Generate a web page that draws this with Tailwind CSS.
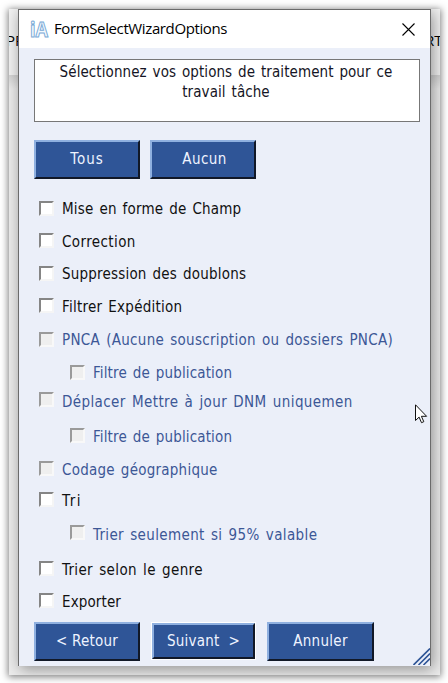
<!DOCTYPE html>
<html lang="fr">
<head>
    <meta charset="UTF-8">
    <meta name="viewport" content="width=device-width, initial-scale=1.0">
    <title>FormSelectWizardOptions</title>
    <script src="https://cdn.jsdelivr.net/npm/@tailwindcss/browser@4"></script>
</head>
<body class="bg-white h-[683px] overflow-hidden px-[9px] pt-[9px]">
    <!-- Application behind the dialog -->
    <div class="relative w-[431px] h-[666px] bg-[#f1f1f1] shadow-[0_1px_7px_1px_rgba(0,0,0,0.5)]">
        <div class="absolute inset-0 overflow-hidden font-['Open_Sans',sans-serif] text-[15px] leading-5">
            <div class="h-[66px] bg-[#f1f1f1]"></div>
            <div class="h-[600px] bg-linear-to-b from-[#d2d2d2] to-[#ececec] to-[14px]"></div>
            <span class="absolute left-[-3px] top-[21px]">PP</span>
            <span class="absolute left-[416px] top-[21px]">RT</span>
        </div>

        <!-- Dialog -->
        <div class="absolute inset-0 overflow-hidden">
            <div class="ml-[9px] w-[413px] h-[657px] border-t border-x border-[#6b6b6b] bg-[#ebeff9] shadow-[2px_3px_14px_rgba(0,0,0,0.4)] flex flex-col">
                <!-- Title bar -->
                <div class="h-[38px] shrink-0 bg-white flex items-center pl-[11px] pr-[15px]">
                    <svg class="w-[19px] h-[20px] overflow-visible" viewBox="0 0 19 20">
                        <text x="0" y="17.500" textLength="18" lengthAdjust="spacingAndGlyphs" font-family="Open Sans, sans-serif" font-weight="bold" font-size="22" fill="#f4f9fd" stroke="#78a9d6" stroke-width="1.100">iA</text>
                    </svg>
                    <h1 class="ml-[5px] mb-[2px] font-['Open_Sans',sans-serif] text-[15px] leading-5 tracking-[-0.38px] whitespace-nowrap">FormSelectWizardOptions</h1>
                    <svg class="ml-auto w-[13px] h-[13px]" viewBox="0 0 13 13" fill="none" stroke="#000" stroke-width="1.100">
                        <path d="M.5.5l12 12M12.500.5l-12 12" />
                    </svg>
                </div>

                <div class="pl-[15px] pt-[11px] font-['DejaVu_Sans_Condensed','DejaVu_Sans',sans-serif] text-[15px] [word-spacing:1.5px]">
                    <!-- Prompt -->
                    <p class="w-[386px] h-[63px] border border-[#777] bg-white text-center leading-5 pt-[2px] pr-[2px] tracking-[0.08px] text-[#151525]">Sélectionnez vos options de traitement pour ce<br>travail tâche</p>

                    <!-- Selection buttons -->
                    <div class="flex gap-[10px] mt-[18px] text-[#eef3ff]">
                        <button class="w-[106px] h-[39px] bg-[#2f5597] border-2 border-t-[#8fb0e0] border-l-[#8fb0e0] border-r-[#111827] border-b-[#111827] tracking-[1px]">Tous</button>
                        <button class="w-[106px] h-[39px] bg-[#2f5597] border-2 border-t-[#8fb0e0] border-l-[#8fb0e0] border-r-[#111827] border-b-[#111827] pl-[3px] tracking-[0.4px]">Aucun</button>
                    </div>

                    <!-- Options -->
                    <div class="pl-[5px] mt-[22px] h-[421px] leading-4 text-[#111] whitespace-nowrap">
                        <div class="flex gap-[8px] h-[32px]"><i class="w-[15px] h-[15px] bg-white border-2 border-t-[#858585] border-l-[#858585] border-r-[#f5f5f5] border-b-[#f5f5f5]"></i><span class="tracking-[0.18px]">Mise en forme de Champ</span></div>
                        <div class="flex gap-[8px] h-[33px]"><i class="w-[15px] h-[15px] bg-white border-2 border-t-[#858585] border-l-[#858585] border-r-[#f5f5f5] border-b-[#f5f5f5]"></i><span class="pt-px tracking-[0.4px]">Correction</span></div>
                        <div class="flex gap-[8px] h-[32px]"><i class="w-[15px] h-[15px] bg-white border-2 border-t-[#858585] border-l-[#858585] border-r-[#f5f5f5] border-b-[#f5f5f5]"></i><span class="tracking-[0.2px]">Suppression des doublons</span></div>
                        <div class="flex gap-[8px] h-[34px]"><i class="w-[15px] h-[15px] bg-white border-2 border-t-[#858585] border-l-[#858585] border-r-[#f5f5f5] border-b-[#f5f5f5]"></i><span class="pt-px tracking-[0.25px]">Filtrer Expédition</span></div>
                        <div class="flex gap-[8px] h-[33px] text-[#3c5796]"><i class="w-[15px] h-[15px] bg-[#efefef] border-2 border-t-[#9a9a9a] border-l-[#9a9a9a] border-r-[#f8f8f8] border-b-[#f8f8f8]"></i><span class="tracking-[0.3px]">PNCA (Aucune souscription ou dossiers PNCA)</span></div>
                        <div class="flex gap-[8px] h-[27px] pl-[31px] text-[#3c5796]"><i class="w-[15px] h-[15px] bg-[#efefef] border-2 border-t-[#9a9a9a] border-l-[#9a9a9a] border-r-[#f8f8f8] border-b-[#f8f8f8]"></i><span class="tracking-[0.14px]">Filtre de publication</span></div>
                        <div class="flex gap-[8px] h-[36px] text-[#3c5796]"><i class="w-[15px] h-[15px] bg-[#efefef] border-2 border-t-[#9a9a9a] border-l-[#9a9a9a] border-r-[#f8f8f8] border-b-[#f8f8f8]"></i><span class="pt-[2px] tracking-[0.4px]">Déplacer Mettre à jour DNM uniquemen</span></div>
                        <div class="flex gap-[8px] h-[33px] pl-[31px] text-[#3c5796]"><i class="w-[15px] h-[15px] bg-[#efefef] border-2 border-t-[#9a9a9a] border-l-[#9a9a9a] border-r-[#f8f8f8] border-b-[#f8f8f8]"></i><span class="pt-px tracking-[0.14px]">Filtre de publication</span></div>
                        <div class="flex gap-[8px] h-[31px] text-[#3c5796]"><i class="w-[15px] h-[15px] bg-[#efefef] border-2 border-t-[#9a9a9a] border-l-[#9a9a9a] border-r-[#f8f8f8] border-b-[#f8f8f8]"></i><span class="pt-px tracking-[0.24px]">Codage géographique</span></div>
                        <div class="flex gap-[8px] h-[33px]"><i class="w-[15px] h-[15px] bg-white border-2 border-t-[#858585] border-l-[#858585] border-r-[#f5f5f5] border-b-[#f5f5f5]"></i><span class="pt-px tracking-[1.6px]">Tri</span></div>
                        <div class="flex gap-[8px] h-[36px] pl-[31px] text-[#3c5796]"><i class="w-[15px] h-[15px] bg-[#efefef] border-2 border-t-[#9a9a9a] border-l-[#9a9a9a] border-r-[#f8f8f8] border-b-[#f8f8f8]"></i><span class="pt-[2px] tracking-[0.37px]">Trier seulement si 95% valable</span></div>
                        <div class="flex gap-[8px] h-[32px]"><i class="w-[15px] h-[15px] bg-white border-2 border-t-[#858585] border-l-[#858585] border-r-[#f5f5f5] border-b-[#f5f5f5]"></i><span class="pt-px tracking-[0.37px]">Trier selon le genre</span></div>
                        <div class="flex gap-[8px] h-[29px]"><i class="w-[15px] h-[15px] bg-white border-2 border-t-[#858585] border-l-[#858585] border-r-[#f5f5f5] border-b-[#f5f5f5]"></i><span class="pt-px tracking-[0.12px]">Exporter</span></div>
                    </div>

                    <!-- Wizard navigation -->
                    <div class="flex text-[#eef3ff] whitespace-pre">
                        <button class="w-[106px] h-[39px] bg-[#2f5597] border-2 border-t-[#8fb0e0] border-l-[#8fb0e0] border-r-[#111827] border-b-[#111827] tracking-[0.2px]">&lt; Retour</button>
                        <button class="ml-[12px] mt-px w-[103px] h-[36px] bg-[#2f5597] border-2 border-t-[#8fb0e0] border-l-[#8fb0e0] border-r-[#111827] border-b-[#111827] outline outline-white tracking-[0.2px]">Suivant  &gt;</button>
                        <button class="ml-[12px] w-[107px] h-[39px] bg-[#2f5597] border-2 border-t-[#8fb0e0] border-l-[#8fb0e0] border-r-[#111827] border-b-[#111827] tracking-[0.3px]">Annuler</button>
                    </div>
                </div>
            </div>
        </div>

        <!-- Resize grip -->
        <svg class="absolute left-[404px] top-[639px] w-[17px] h-[17px]" viewBox="0 0 17 17" stroke="#2f5597" stroke-width="1.600">
            <path d="M.5 17L17 .5M5.500 17L17 5.500M10.500 17L17 10.500" />
        </svg>

        <!-- Mouse pointer -->
        <svg class="absolute left-[406px] top-[395px] w-[13px] h-[20px]" viewBox="0 0 13 20" fill="#fff" stroke="#111" stroke-width="1">
            <path d="M.5.800v15.700l3.600-3.400 2.400 5.600 2.300-1-2.400-5.400h5.200z" />
        </svg>
    </div>
</body>
</html>
